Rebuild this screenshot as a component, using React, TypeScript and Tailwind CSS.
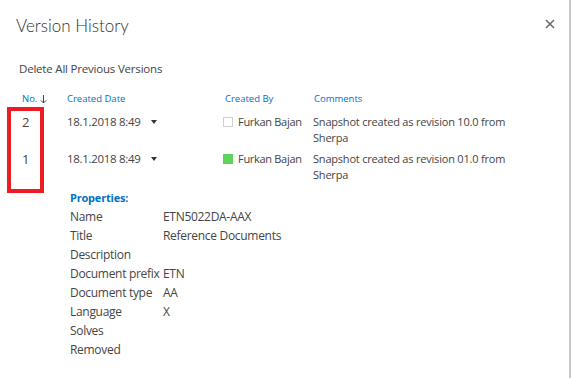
import React from "react";

const font = { fontFamily: '"Open Sans", "Noto Sans", sans-serif' };

const rows = [
  { no: "2", date: "18.1.2018 8:49", filled: false, by: "Furkan Bajan", comment: "Snapshot created as revision 10.0 from Sherpa" },
  { no: "1", date: "18.1.2018 8:49", filled: true, by: "Furkan Bajan", comment: "Snapshot created as revision 01.0 from Sherpa" },
];

const props: [string, string][] = [
  ["Name", "ETN5022DA-AAX"],
  ["Title", "Reference Documents"],
  ["Description", ""],
  ["Document prefix", "ETN"],
  ["Document type", "AA"],
  ["Language", "X"],
  ["Solves", ""],
  ["Removed", ""],
];

export default function App() {
  return (
    <div className="relative w-[571px] h-[378px] bg-white overflow-hidden border-r-2 border-[#c8c8c8] text-[#444]" style={font}>
      <div className="flex items-start justify-between pl-[16px] pr-[14px] pt-[12px]">
        <h1 className="text-[17px] font-light text-[#333] leading-[28px]" style={{ fontFamily: 'Lato, "Open Sans", sans-serif' }}>
          Version History
        </h1>
        <svg width="10" height="10" viewBox="0 0 10 10" className="mt-[7px]">
          <path d="M1 1L9 9M9 1L1 9" stroke="#666" strokeWidth="1.5" />
        </svg>
      </div>
      <div className="pl-[19px] mt-[20px] text-[11.5px] leading-[18px] text-[#444] tracking-[-0.2px]">Delete All Previous Versions</div>

      <div className="mt-[13px] pl-[22px]">
        <div className="grid grid-cols-[45px_158px_89px_200px] text-[9.5px] leading-[16px] text-[#0072c6]">
          <div className="flex items-center gap-[3px]">
            No.
            <svg width="7" height="9" viewBox="0 0 7 9">
              <path d="M3.5 0V8M0.8 5.3L3.5 8L6.2 5.3" stroke="#444" strokeWidth="1" fill="none" />
            </svg>
          </div>
          <div>Created Date</div>
          <div>Created By</div>
          <div>Comments</div>
        </div>
        <div className="mt-[7px] flex flex-col gap-[5px]">
          {rows.map((r) => (
            <div key={r.no} className="grid grid-cols-[45px_158px_89px_200px] text-[12px] leading-[16px] text-[#444]">
              <div className="text-[13px]">{r.no}</div>
              <div className="flex items-start">
                <span className="text-[11.5px] tracking-[-0.3px]">{r.date}</span>
                <svg width="6" height="4" viewBox="0 0 6 4" className="ml-[10px] mt-[6px]">
                  <path d="M0 0H6L3 4Z" fill="#333" />
                </svg>
              </div>
              <div className="flex items-start -ml-[2px]">
                <span className={`mt-[3px] w-[10px] h-[10px] ${r.filled ? "bg-[#5fd35b]" : "border border-[#d0d0d0] bg-white"}`} />
                <span className="ml-[5px] text-[11px] tracking-[-0.3px] whitespace-nowrap">{r.by}</span>
              </div>
              <div className="text-[11px] tracking-[-0.2px] -ml-[1px] pr-[2px]">{r.comment}</div>
            </div>
          ))}
        </div>
        <div className="ml-[48px] mt-[6px]">
          <div className="text-[11px] leading-[18px] font-bold text-[#0072c6] tracking-[-0.2px]">Properties:</div>
          <div className="flex flex-col">
            {props.map(([k, v]) => (
              <div key={k} className="grid grid-cols-[93px_1fr] text-[12px] leading-[19px] text-[#444] tracking-[-0.3px]">
                <div className="whitespace-nowrap">{k}</div>
                <div>{v}</div>
              </div>
            ))}
          </div>
        </div>
      </div>

      <div className="absolute left-[7px] top-[107px] w-[37px] h-[86px] border-4 border-[#ed1c24]" />
    </div>
  );
}
